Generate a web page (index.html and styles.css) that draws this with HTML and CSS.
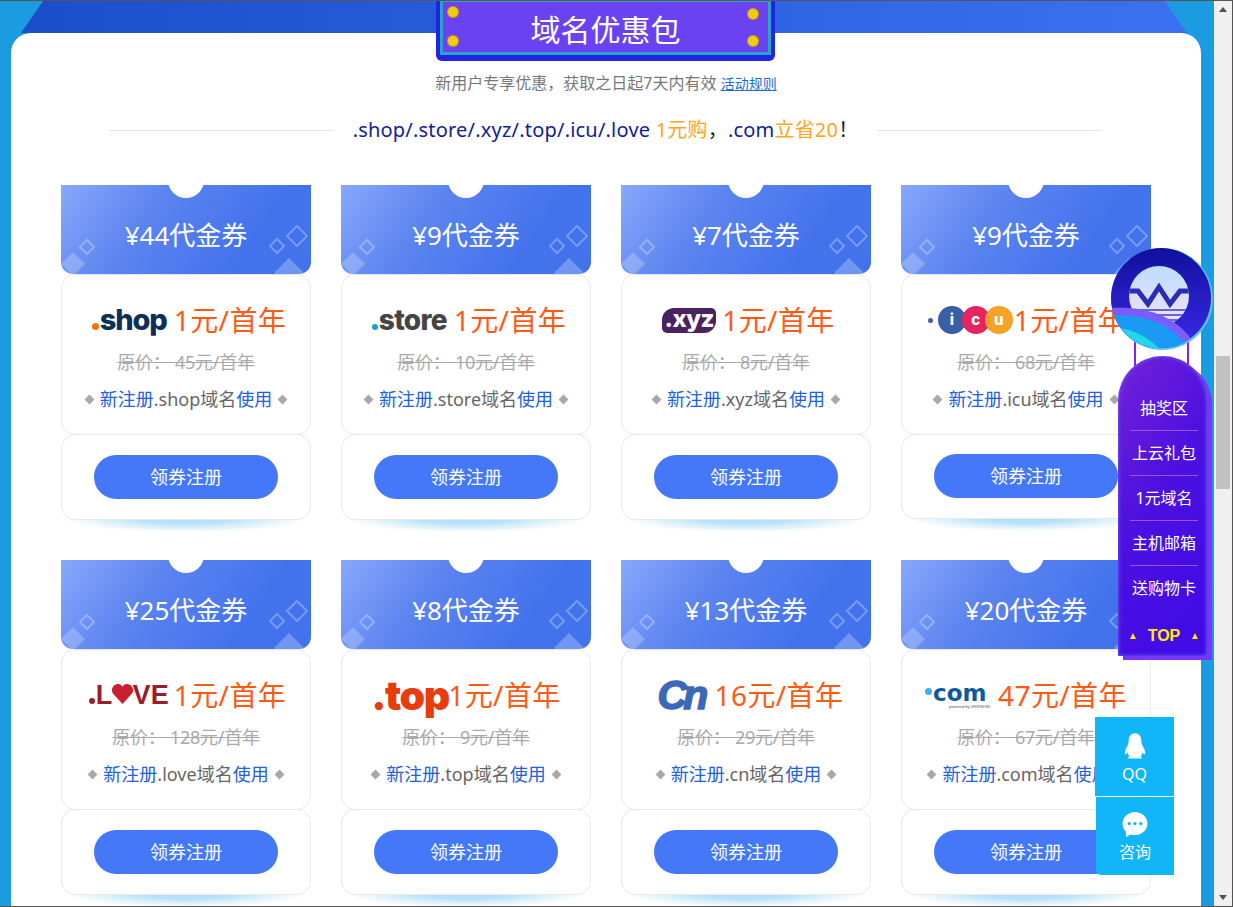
FILE: index.html
```html
<!DOCTYPE html>
<html lang="zh-CN">
<head>
<meta charset="utf-8">
<title>域名优惠包</title>
<link rel="stylesheet" href="styles.css">
</head>
<body>
<div class="window">
  <main class="main">
    <div class="banner"></div>
    <section class="panel">
      <h1 class="title"><span class="title-inner">域名优惠包<i class="rivet r1"></i><i class="rivet r2"></i><i class="rivet r3"></i><i class="rivet r4"></i></span></h1>
      <p class="sub">新用户专享优惠，获取之日起7天内有效 <a class="rule-link">活动规则</a></p>
      <div class="headline">
        <span class="line"></span>
        <p class="headline-text"><span class="navy">.shop/.store/.xyz/.top/.icu/.love</span> <span class="amber">1元购</span>，<span class="navy">.com</span><span class="amber">立省20</span>！</p>
        <span class="line"></span>
      </div>
      <div class="grid">

        <article class="card">
          <header class="head">¥44代金券<svg class="deco" viewBox="0 0 250 89"><use href="#deco"/></svg></header>
          <div class="body">
            <div class="offer"><span class="logo w88"><span class="lg-shop"><b class="dot d-orange"></b>shop</span></span><span class="price">1元/首年</span></div>
            <p class="orig">原价： 45元/首年</p>
            <p class="desc"><i class="dm"></i><em>新注册</em>.shop域名<em>使用</em><i class="dm"></i></p>
          </div>
          <div class="foot"><a class="btn">领券注册</a></div>
        </article>

        <article class="card">
          <header class="head">¥9代金券<svg class="deco" viewBox="0 0 250 89"><use href="#deco"/></svg></header>
          <div class="body">
            <div class="offer"><span class="logo w88"><span class="lg-store"><b class="dot d-teal"></b>store</span></span><span class="price">1元/首年</span></div>
            <p class="orig">原价： 10元/首年</p>
            <p class="desc"><i class="dm"></i><em>新注册</em>.store域名<em>使用</em><i class="dm"></i></p>
          </div>
          <div class="foot"><a class="btn">领券注册</a></div>
        </article>

        <article class="card">
          <header class="head">¥7代金券<svg class="deco" viewBox="0 0 250 89"><use href="#deco"/></svg></header>
          <div class="body">
            <div class="offer"><span class="logo w65"><span class="lg-xyz">.xyz</span></span><span class="price">1元/首年</span></div>
            <p class="orig">原价： 8元/首年</p>
            <p class="desc"><i class="dm"></i><em>新注册</em>.xyz域名<em>使用</em><i class="dm"></i></p>
          </div>
          <div class="foot"><a class="btn">领券注册</a></div>
        </article>

        <article class="card short">
          <header class="head">¥9代金券<svg class="deco" viewBox="0 0 250 89"><use href="#deco"/></svg></header>
          <div class="body">
            <div class="offer"><span class="logo w88"><span class="lg-icu"><b class="dot d-navy"></b><b class="ball b-i">i</b><b class="ball b-c">c</b><b class="ball b-u">u</b></span></span><span class="price">1元/首年</span></div>
            <p class="orig">原价： 68元/首年</p>
            <p class="desc"><i class="dm"></i><em>新注册</em>.icu域名<em>使用</em><i class="dm"></i></p>
          </div>
          <div class="foot"><a class="btn">领券注册</a></div>
        </article>

        <article class="card">
          <header class="head">¥25代金券<svg class="deco" viewBox="0 0 250 89"><use href="#deco"/></svg></header>
          <div class="body">
            <div class="offer"><span class="logo w88"><span class="lg-love"><b class="dot d-red"></b>L<svg class="heart" viewBox="0 0 24 22"><path d="M12 21 2 10C-1 5 3 0 7.500 0 9.500 0 11 1 12 3 13 1 14.500 0 16.500 0 21 0 25 5 22 10Z"/></svg>VE</span></span><span class="price">1元/首年</span></div>
            <p class="orig">原价： 128元/首年</p>
            <p class="desc"><i class="dm"></i><em>新注册</em>.love域名<em>使用</em><i class="dm"></i></p>
          </div>
          <div class="foot"><a class="btn">领券注册</a></div>
        </article>

        <article class="card">
          <header class="head">¥8代金券<svg class="deco" viewBox="0 0 250 89"><use href="#deco"/></svg></header>
          <div class="body">
            <div class="offer"><span class="logo w77"><span class="lg-top">.top</span></span><span class="price">1元/首年</span></div>
            <p class="orig">原价： 9元/首年</p>
            <p class="desc"><i class="dm"></i><em>新注册</em>.top域名<em>使用</em><i class="dm"></i></p>
          </div>
          <div class="foot"><a class="btn">领券注册</a></div>
        </article>

        <article class="card">
          <header class="head">¥13代金券<svg class="deco" viewBox="0 0 250 89"><use href="#deco"/></svg></header>
          <div class="body">
            <div class="offer"><span class="logo w66"><span class="lg-cn">Cn</span></span><span class="price">16元/首年</span></div>
            <p class="orig">原价： 29元/首年</p>
            <p class="desc"><i class="dm"></i><em>新注册</em>.cn域名<em>使用</em><i class="dm"></i></p>
          </div>
          <div class="foot"><a class="btn">领券注册</a></div>
        </article>

        <article class="card">
          <header class="head">¥20代金券<svg class="deco" viewBox="0 0 250 89"><use href="#deco"/></svg></header>
          <div class="body">
            <div class="offer"><span class="logo w73"><span class="lg-com"><b class="dot d-sky"></b>com<small>powered by VERISIGN</small></span></span><span class="price">47元/首年</span></div>
            <p class="orig">原价： 67元/首年</p>
            <p class="desc"><i class="dm"></i><em>新注册</em>.com域名<em>使用</em><i class="dm"></i></p>
          </div>
          <div class="foot"><a class="btn">领券注册</a></div>
        </article>

      </div>
    </section>
  </main>

  <div class="scrollbar">
    <span class="arrow up"></span>
    <span class="thumb"></span>
    <span class="arrow down"></span>
  </div>

  <aside class="float-nav">
    <i class="rail left"></i><i class="rail right"></i>
    <svg class="badge" viewBox="0 0 102 102">
      <defs>
        <linearGradient id="bg" x1="0" y1="0" x2="0" y2="1"><stop offset="0" stop-color="#10109c"/><stop offset="1" stop-color="#3a2ae8"/></linearGradient>
        <linearGradient id="disc" x1="0" y1="0" x2="0" y2="1"><stop offset="0" stop-color="#bcdcff"/><stop offset="1" stop-color="#f4e2fa"/></linearGradient>
        <clipPath id="cc"><circle cx="50" cy="50" r="50"/></clipPath>
        <clipPath id="dc"><circle cx="48" cy="48" r="30"/></clipPath>
      </defs>
      <circle cx="51" cy="51" r="51" fill="#5cc0fb"/>
      <circle cx="50" cy="50" r="50" fill="url(#bg)"/>
      <circle cx="48" cy="48" r="30" fill="url(#disc)"/>
      <g clip-path="url(#dc)">
        <path d="M16 43H27L37 56 48 39 59 56 69 43H80" fill="none" stroke="#2a2cb4" stroke-width="5"/>
        <path d="M16 62H80M16 67H80M16 72H80" stroke="#3a3cc8" stroke-width="1.500"/>
      </g>
      <g clip-path="url(#cc)">
        <path d="M0 60C35 58 66 68 82 94V102H0Z" fill="#7a5cff"/>
        <path d="M0 67C30 66 62 74 78 102H0Z" fill="#1a9af2"/>
        <path d="M0 79C20 80 36 88 50 102H0Z" fill="#20d8e8"/>
      </g>
    </svg>
    <nav class="menu">
      <a class="menu-item">抽奖区</a>
      <a class="menu-item">上云礼包</a>
      <a class="menu-item">1元域名</a>
      <a class="menu-item">主机邮箱</a>
      <a class="menu-item">送购物卡</a>
      <a class="menu-top"><i class="tri"></i>TOP<i class="tri"></i></a>
    </nav>
  </aside>

  <aside class="contact">
    <a class="contact-item qq">
      <svg class="c-ico" viewBox="0 0 24 28"><path d="M12 0C7 0 5 4 5 9 5 11 4.500 12.500 3 15 1.500 17.500 .5 21 1 23 2 23.500 3 22.500 4 21 4.500 23 5 24.500 6 25.500 5 26 4.500 26.500 4.500 27.500H19.500C19.500 26.500 19 26 18 25.500 19 24.500 19.500 23 20 21 21 22.500 22 23.500 23 23 23.500 21 22.500 17.500 21 15 19.500 12.500 19 11 19 9 19 4 17 0 12 0Z"/></svg>
      <span>QQ</span>
    </a>
    <a class="contact-item ask">
      <svg class="c-ico chat" viewBox="0 0 26 26"><path d="M13 0C20.200 0 26 5.400 26 12 26 18.600 20.200 24 13 24 11.500 24 10 23.700 8.700 23.300L3.600 26C3.800 24 3.800 22 3.400 20.300 1.300 18.200 0 15.300 0 12 0 5.400 5.800 0 13 0Z"/><circle cx="7" cy="12" r="1.700" class="cd"/><circle cx="13" cy="12" r="1.700" class="cd"/><circle cx="19" cy="12" r="1.700" class="cd"/></svg>
      <span>咨询</span>
    </a>
  </aside>
</div>

<svg class="defs" width="0" height="0">
  <g id="deco">
    <path d="M12 67 24 79 12 91 0 79Z" fill="#fff" fill-opacity=".22"/>
    <path d="M26 55 33 62 26 69 19 62Z" fill="none" stroke="#fff" stroke-opacity=".28" stroke-width="2"/>
    <path d="M216 54 223 61 216 68 209 61Z" fill="none" stroke="#fff" stroke-opacity=".28" stroke-width="2"/>
    <path d="M236 41 246 51 236 61 226 51Z" fill="none" stroke="#fff" stroke-opacity=".28" stroke-width="2"/>
    <path d="M228 73 243 88 228 103 213 88Z" fill="#fff" fill-opacity=".25"/>
  </g>
</svg>
</body>
</html>
```

FILE: styles.css
```css
* { box-sizing: border-box; }
html, body { margin: 0; height: 100%; overflow: hidden; }
body { font-family: "Noto Sans", "Noto Sans CJK SC", sans-serif; background: #fff; }
p, h1 { margin: 0; font-weight: normal; }
em, i { font-style: normal; }

.window {
  position: relative;
  display: flex;
  width: 1233px;
  height: 907px;
  border-top: 1px solid #555;
  border-bottom: 1px solid #555;
  border-right: 1px solid #555;
  overflow: hidden;
}
.main {
  flex: 0 0 1214px;
  height: 905px;
  background: #1b9be0;
  overflow: hidden;
  padding: 0 13px 0 11px;
}
.banner {
  height: 32px;
  margin: 0 -2px;
  background: linear-gradient(90deg, #1a4ecb, #3a72f2);
  clip-path: polygon(34px 0, 1156px 0, 1178px 100%, 12px 100%);
}
.panel {
  display: flow-root;
  height: 1200px;
  background: #fff;
  border-radius: 20px 20px 0 0;
  padding: 0 50px;
}
.title {
  position: relative;
  width: 339px;
  height: 61px;
  margin: -33px 0 0 375px;
  padding: 0 4px 6px;
  background: #2323e4;
  border-radius: 0 0 6px 6px;
}
.title-inner {
  position: relative;
  display: block;
  height: 100%;
  border: 3px solid #2aa3c6;
  border-top-width: 2px;
  background: #6a42f2;
  color: #fff;
  font-size: 30px;
  line-height: 56px;
  text-align: center;
}
.rivet {
  position: absolute;
  width: 10px;
  height: 10px;
  border-radius: 50%;
  background: #f0cc10;
  box-shadow: 0 0 0 1px #d09a10;
}
.r1 { left: 5px; top: 5px; }
.r2 { left: 5px; top: 34px; }
.r3 { right: 10px; top: 7px; }
.r4 { right: 10px; top: 34px; }

.sub {
  margin-top: 12px;
  height: 20px;
  font-size: 16px;
  line-height: 20px;
  color: #777;
  text-align: center;
}
.rule-link { color: #1a6fd4; font-size: 14px; text-decoration: underline; margin-left: 0; }

.headline {
  display: flex;
  align-items: center;
  justify-content: space-between;
  width: 993px;
  height: 30px;
  margin: 22px auto 0 48px;
}
.line { width: 225px; height: 1px; background: #e2e5f3; }
.headline-text { font-size: 20px; line-height: 30px; white-space: nowrap; color: #222; letter-spacing: .2px; }
.navy { color: #10209c; }
.amber { color: #ffa51e; }

.grid {
  display: grid;
  grid-template-columns: repeat(4, 250px);
  gap: 40px 30px;
  margin-top: 40px;
}
.card { position: relative; height: 335px; display: flex; flex-direction: column; }
.card.short { height: 334px; }
.card::after {
  content: "";
  position: absolute;
  left: 6px;
  right: 6px;
  bottom: -12px;
  height: 12px;
  background: radial-gradient(ellipse 50% 100% at 50% 0, #b6e1f8 30%, rgba(182, 225, 248, 0) 100%);
}
.head {
  position: relative;
  flex: 0 0 89px;
  overflow: hidden;
  padding-top: 31px;
  text-align: center;
  color: #fff;
  font-size: 26px;
  line-height: 38px;
  border-radius: 0 0 12px 12px;
  background: linear-gradient(125deg, #88a8fb 0%, #5c84f0 35%, #4272ec 75%);
}
.head::before {
  content: "";
  position: absolute;
  left: 107px;
  top: -23px;
  width: 36px;
  height: 36px;
  border-radius: 50%;
  background: #fff;
}
.deco { position: absolute; left: 0; top: 0; width: 250px; height: 89px; }
.defs { position: absolute; }

.body {
  flex: 0 0 161px;
  border: 1px solid #e8e8e8;
  border-radius: 14px;
  background: #fff;
  text-align: center;
}
.offer {
  display: flex;
  justify-content: center;
  align-items: center;
  height: 40px;
  margin-top: 25px;
}
.logo { display: block; text-align: left; white-space: nowrap; }
.w88 { width: 88px; padding-left: 6px; }
.w65 { width: 65px; }
.w77 { width: 77px; }
.w66 { width: 66px; }
.w73 { width: 73px; }
.price { font-size: 28px; line-height: 40px; color: #ff5a14; white-space: nowrap; letter-spacing: .4px; }
.orig { margin-top: 9px; font-size: 18px; line-height: 26px; color: #aaa; text-decoration: line-through; white-space: nowrap; letter-spacing: -.25px; }
.desc {
  display: flex;
  justify-content: center;
  align-items: center;
  margin-top: 11px;
  font-size: 18px;
  line-height: 26px;
  color: #666;
  white-space: nowrap;
}
.desc em { color: #2260dc; }
.dm {
  width: 7px;
  height: 7px;
  margin: 0 7px;
  background: #a8a8a8;
  transform: rotate(45deg);
}

.foot {
  flex: 0 0 86px;
  margin-top: -1px;
  padding-top: 20px;
  border: 1px solid #e8e8e8;
  border-radius: 14px;
  background: #fff;
  text-align: center;
}
.short .foot { flex-basis: 85px; padding-top: 19px; }
.btn {
  display: block;
  width: 184px;
  height: 44px;
  margin: 0 auto;
  border-radius: 22px;
  background: #4478f9;
  color: #fff;
  font-size: 18px;
  line-height: 44px;
}

/* logos */
.dot { display: inline-block; border-radius: 50%; }
.d-orange { width: 7px; height: 7px; background: #ee7410; margin-right: 1px; }
.d-teal { width: 6px; height: 6px; background: #12a8b8; margin-right: 1px; }
.d-navy { width: 5px; height: 5px; background: #3b5ea6; margin-right: 5px; align-self: center; }
.d-red { width: 6px; height: 6px; background: #a01c2c; margin-right: 1px; }
.d-sky { width: 7px; height: 7px; background: #3cb0ea; margin-right: 1px; vertical-align: 6px; }

.lg-shop, .lg-store { font-family: Inter, sans-serif; font-weight: 800; font-size: 29px; line-height: 40px; letter-spacing: -1.200px; }
.lg-shop { color: #0c3058; }
.lg-store { color: #444; letter-spacing: -.7px; font-size: 28px; }
.lg-xyz {
  display: inline-block;
  width: 54px;
  height: 25px;
  margin-left: 5px;
  border-radius: 12px 5px 12px 5px;
  background: #4a2260;
  color: #fff;
  font-family: Inter, sans-serif;
  font-weight: 800;
  font-size: 24px;
  line-height: 22px;
  letter-spacing: -.5px;
  text-align: center;
}
.lg-icu { display: flex; align-items: center; height: 30px; margin-left: -4px; }
.ball {
  width: 28px;
  height: 28px;
  margin-right: -4px;
  border-radius: 50%;
  color: #fff;
  font-family: Inter, sans-serif;
  font-size: 15px;
  font-weight: 800;
  line-height: 27px;
  text-align: center;
}
.b-i { background: #3b5ea6; }
.b-c { background: #e6245e; }
.b-u { background: #f5a01e; margin-left: -1px; opacity: .96; }
.lg-love { display: flex; align-items: flex-end; margin-left: -3px; height: 24px; color: #9c1c2a; font-family: "Liberation Sans", sans-serif; font-weight: 700; font-size: 27px; line-height: 24px; letter-spacing: .2px; }
.lg-love .d-red { margin-bottom: 3px; }
.heart { width: 23px; height: 21px; margin: 0 -2px 2px -1px; fill: #c8202c; }
.lg-top { color: #e83c0c; font-family: Inter, sans-serif; font-weight: 900; font-size: 41px; line-height: 40px; letter-spacing: -1.500px; }
.lg-cn { display: inline-block; color: #3c68b8; -webkit-text-stroke: 1.500px #3c68b8; font-family: "Liberation Sans", sans-serif; font-weight: 700; font-style: italic; font-size: 41px; line-height: 40px; letter-spacing: -4px; margin-left: 9px; }
.lg-com { position: relative; display: block; color: #0a5a9c; font-family: "DejaVu Sans", sans-serif; font-weight: 700; font-size: 23px; line-height: 22px; margin-top: -4px; }
.lg-com small { position: absolute; left: 24px; top: 22px; font-family: "Liberation Sans", sans-serif; font-size: 4px; line-height: 6px; font-weight: 400; color: #555; }

/* scrollbar */
.scrollbar { position: relative; flex: 1; background: #f0f0f0; }
.thumb { position: absolute; left: 2px; top: 355px; width: 14px; height: 133px; background: #c1c1c1; }
.arrow { position: absolute; left: 5px; width: 0; height: 0; border-left: 4px solid transparent; border-right: 4px solid transparent; }
.up { top: 6px; border-bottom: 5px solid #505050; }
.down { bottom: 6px; border-top: 5px solid #505050; }

/* floating */
.float-nav { position: absolute; left: 1111px; top: 247px; width: 102px; height: 413px; }
.badge { position: absolute; left: 0; top: 0; width: 102px; height: 102px; z-index: 2; }
.rail { position: absolute; top: 90px; width: 2px; height: 30px; background: #8524f2; }
.rail.left { left: 23px; }
.rail.right { left: 76px; }
.menu {
  position: absolute;
  left: 7px;
  top: 108px;
  width: 89px;
  height: 300px;
  padding: 30px 9px 0 12px;
  border-radius: 45px 45px 0 0;
  background: linear-gradient(125deg, #7422d8 0%, #4c10e0 45%, #3f0ae8 100%);
  box-shadow: 5px 4px 0 #7a36f8, inset 0 0 4px #6a6cf0;
}
.menu-item {
  display: block;
  height: 45px;
  color: #fff;
  font-size: 16px;
  line-height: 44px;
  text-align: center;
  white-space: nowrap;
  border-bottom: 1px solid #a050e0;
}
.menu-item:nth-child(5) { border-bottom: 0; }
.menu-top {
  display: flex;
  align-items: center;
  justify-content: space-between;
  height: 26px;
  margin: 12px 0 0;
  color: #ffea00;
  font-family: "Liberation Sans", sans-serif;
  font-size: 16px;
  font-weight: 700;
}
.tri { width: 0; height: 0; border-left: 3px solid transparent; border-right: 3px solid transparent; border-bottom: 6px solid #ffea00; }

.contact { position: absolute; left: 1095px; top: 716px; width: 79px; }
.contact-item {
  display: flex;
  flex-direction: column;
  align-items: center;
  background: #10b6f8;
  color: #fff;
  font-size: 16px;
}
.qq { height: 79px; padding-top: 16px; line-height: 22px; }
.ask { height: 78px; margin: 1px 0 0 1px; padding-top: 15px; line-height: 30px; border-radius: 0 0 0 5px; }
.c-ico { width: 22px; height: 26px; fill: #fff; margin-bottom: 4px; }
.chat { width: 26px; height: 25px; margin-bottom: 0; }
.cd { fill: #10b6f8; }
```
